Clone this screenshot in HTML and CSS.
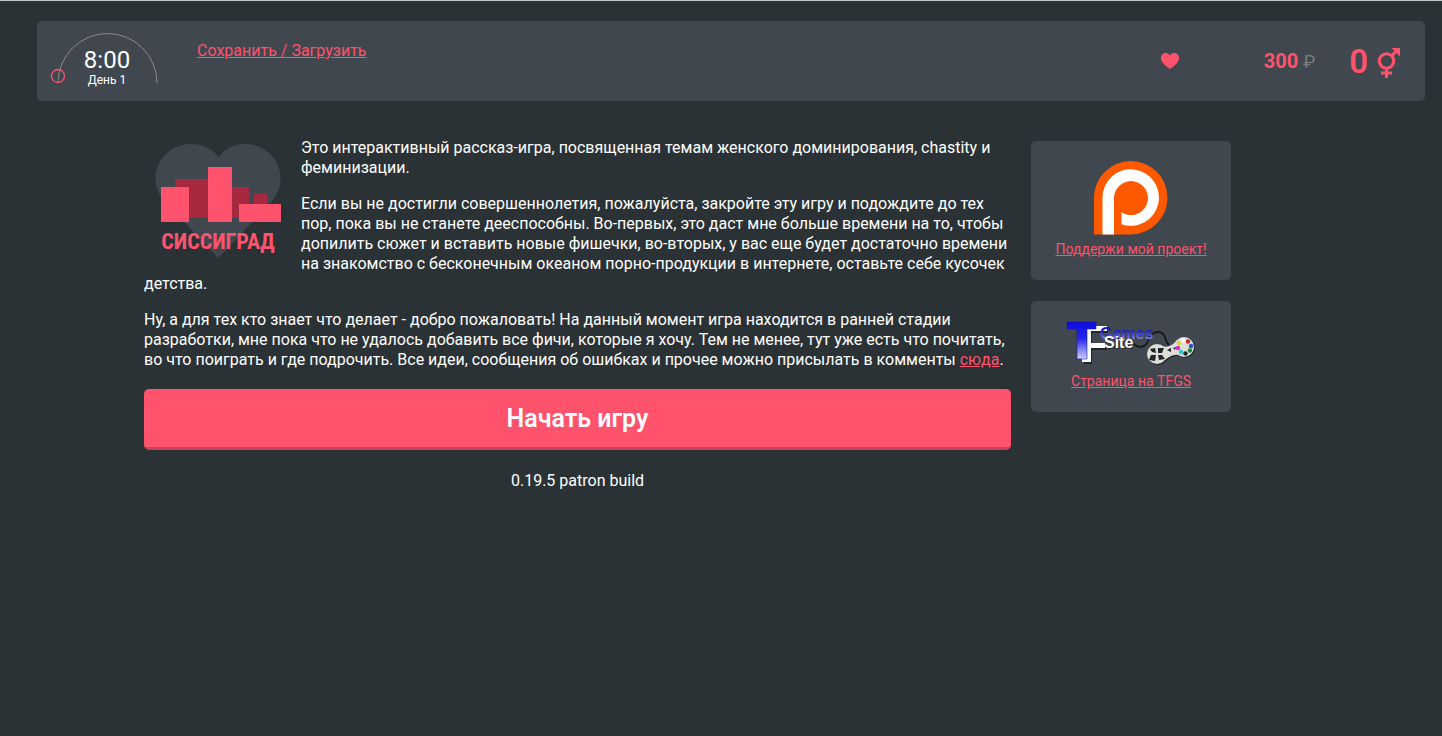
FILE: index.html
```html
<!DOCTYPE html>
<html lang="ru">
<head>
<meta charset="utf-8">
<meta name="viewport" content="width=device-width, initial-scale=1">
<title>Сиссиград</title>
<link rel="stylesheet" href="styles.css">
</head>
<body>
<header class="topbar">
  <div class="clock">
    <svg class="clock-arc" viewBox="0 0 110 56" aria-hidden="true">
      <path d="M8 50A49.500 49.500 0 0 1 107 50" fill="none" stroke="#878b8e"/>
      <circle cx="8" cy="43" r="6.500" fill="none" stroke="#ff526c" stroke-width="1.300"/>
    </svg>
    <div class="clock-time">8:00</div>
    <div class="clock-day">День 1</div>
  </div>
  <nav class="menu"><a href="#save">Сохранить / Загрузить</a></nav>
  <div class="stats">
    <svg class="heart" viewBox="0 0 18 16" aria-hidden="true"><path d="M9 16C5 13 0 9.500 0 5C0 2 2 0 4.800 0C6.800 0 8.200 1 9 2.500C9.800 1 11.200 0 13.200 0C16 0 18 2 18 5C18 9.500 13 13 9 16Z" fill="#ff526c"/></svg>
    <div class="money"><b>300</b> <span class="currency">₽</span></div>
    <div class="score"><b>0</b>
      <svg class="gender" viewBox="0 0 24 32" aria-hidden="true"><g fill="none" stroke="#ff526c" stroke-width="3.100"><circle cx="9.500" cy="14" r="7.200"/><path d="M14.500 9L20 3.500M9.500 21V31M4 26H15"/></g><path d="M14.500 1H23V9.500L20.300 6.800L17.200 3.700Z" fill="#ff526c"/></svg>
    </div>
  </div>
</header>
<main class="page">
  <article class="story">
    <svg class="logo" viewBox="0 0 157 130" role="img" aria-label="Сиссиград">
      <path d="M74.500 120L22 65C8 51 8 29 22 16C36 3 58 3 71 15L74.500 19L78 15C91 3 113 3 126 16C140 29 140 51 126 65Z" fill="#40474e"/>
      <path d="M31 41H88V49H105V80H31ZM110 56H123V80H110Z" fill="#a6293f"/>
      <path d="M17 49H45V84H17ZM64 29H88V84H64ZM95 66H137V84H95Z" fill="#ff526c"/>
      <text class="logo-text" x="74" y="111" text-anchor="middle">СИССИГРАД</text>
    </svg>
    <p>Это интерактивный рассказ-игра, посвященная темам женского доминирования, chastity и феминизации.</p>
    <p>Если вы не достигли совершеннолетия, пожалуйста, закройте эту игру и подождите до тех пор, пока вы не станете дееспособны. Во-первых, это даст мне больше времени на то, чтобы допилить сюжет и вставить новые фишечки, во-вторых, у вас еще будет достаточно времени на знакомство с бесконечным океаном порно-продукции в интернете, оставьте себе кусочек детства.</p>
    <p>Ну, а для тех кто знает что делает - добро пожаловать! На данный момент игра находится в ранней стадии разработки, мне пока что не удалось добавить все фичи, которые я хочу. Тем не менее, тут уже есть что почитать, во что поиграть и где подрочить. Все идеи, сообщения об ошибках и прочее можно присылать в комменты <a href="#comments">сюда</a>.</p>
    <button class="start" type="button">Начать игру</button>
    <div class="version">0.19.5 patron build</div>
  </article>
  <aside class="sidebar">
    <section class="card">
      <svg class="patreon" viewBox="0 0 74 74" aria-hidden="true">
        <path d="M0 73.500V37A36.750 36.750 0 1 1 37 73.500Z" fill="#ff5900"/>
        <path d="M8.500 73.500V36.500A28.250 28.250 0 1 1 27.500 63.200V51.200A17 17 0 1 0 20 36.500V73.500Z" fill="#fff"/>
      </svg>
      <a href="#patreon">Поддержи мой проект!</a>
    </section>
    <section class="card">
      <svg class="tfgs" viewBox="0 0 130 46" aria-hidden="true">
        <defs>
          <linearGradient id="blue" x2="0" y2="1"><stop offset="0" stop-color="#0b0be0"/><stop offset=".45" stop-color="#2727ee"/><stop offset="1" stop-color="#d0d0ff"/></linearGradient>
          <linearGradient id="word" x2="0" y2="1"><stop offset=".35" stop-color="#1c1cc8"/><stop offset=".85" stop-color="#8c8cf4"/></linearGradient>
        </defs>
        <path d="M18 7H42V12H26V24H41V29H26V43H18Z" fill="#20252b"/>
        <path d="M16 5H41V10H25V22H39V27H25V41H16Z" fill="#fff"/>
        <path d="M1 1H30V8H21V38H11V8H1Z" fill="url(#blue)" stroke="#1717a0" stroke-width=".6"/>
        <path d="M68 23C73 28 80 26 82 20C85 12 91 9 96 12C101 15 98 20 103 24" fill="none" stroke="#14181c" stroke-width="1.800"/>
        <text class="tfgs-word" x="34" y="18" fill="url(#word)">Games</text>
        <text class="tfgs-shadow" x="39" y="28">Site</text>
        <text class="tfgs-site" x="38" y="27">Site</text>
        <g transform="translate(1 1)" fill="#20252b"><circle cx="91" cy="33" r="10"/><circle cx="118" cy="26" r="10"/><path d="M94 24Q103 29 111 19L118 35Q108 31 99 39Z"/></g>
        <g fill="#deded8"><circle cx="91" cy="33" r="10"/><circle cx="118" cy="26" r="10"/><path d="M94 24Q103 29 111 19L118 35Q108 31 99 39Z"/></g>
        <path d="M84 28L89 27L90 32L86 31ZM92 27L98 27L96 32L92 32ZM83 39L85 34L90 34L89 40ZM92 34L96 34L99 38L93 39Z" fill="#22252a"/>
        <path d="M101 29L105 27L105 31ZM107 27L110 26L109 29Z" fill="#22252a"/>
        <circle cx="117" cy="19.500" r="2.200" fill="#fff"/><circle cx="122" cy="20.500" r="2.200" fill="#c52832"/><circle cx="125" cy="25" r="2.200" fill="#2854ca"/><circle cx="124" cy="29.500" r="2.200" fill="#19853a"/><circle cx="119.500" cy="32.500" r="2.200" fill="#25282c"/><circle cx="115" cy="31" r="2.200" fill="#20c8d0"/><circle cx="112" cy="27" r="2.200" fill="#db28db"/><circle cx="113" cy="22" r="2.200" fill="#d9d62c"/>
      </svg>
      <a href="#tfgs">Страница на TFGS</a>
    </section>
  </aside>
</main>
</body>
</html>
```
FILE: styles.css
```css
* { box-sizing: border-box; }
body {
  margin: 0;
  min-height: 100vh;
  padding: 20px 17px 20px 37px;
  border-top: 1px solid #bdc9cb;
  background: #2b3235;
  color: #fff;
  font: 16px/20px Roboto, "Liberation Sans", sans-serif;
}
a { color: #ff526c; text-decoration: underline; }
.topbar {
  display: flex;
  align-items: center;
  min-height: 80px;
  padding: 0 24px 0 13px;
  border-radius: 5px;
  background: #40474e;
}
.clock {
  position: relative;
  width: 110px;
  height: 56px;
  padding-top: 15px;
  padding-left: 4px;
  text-align: center;
}
.clock-arc { position: absolute; inset: 0; width: 110px; height: 56px; }
.clock-time { font-size: 24px; line-height: 24px; }
.clock-day { font-size: 12px; line-height: 16px; }
.menu { align-self: flex-start; padding: 20px 0 0 37px; }
.stats { display: flex; align-items: center; margin-left: auto; color: #ff526c; }
.heart { width: 18px; height: 16px; margin-right: 85px; }
.money { margin-right: 34px; font-size: 20px; line-height: 24px; }
.currency { color: #777b7f; font-size: 18px; }
.score { display: flex; align-items: center; gap: 9px; padding-top: 2px; font-size: 33px; line-height: 40px; }
.score b { font-weight: 600; }
.gender { width: 24px; height: 32px; margin-top: 2px; }
.page {
  display: flex;
  align-items: flex-start;
  gap: 20px;
  padding: 37px 194px 0 107px;
}
.story { flex: 1; min-width: 0; }
.story p { margin: 0 0 16px; }
.logo { float: left; width: 157px; height: 130px; }
.logo-text { fill: #ff526c; font: bold 22px "Roboto Condensed", "Liberation Sans Narrow", Roboto, sans-serif; }
.start {
  display: block;
  width: 100%;
  margin: 19px 0 20px;
  padding: 15px 20px 14px;
  border: 0;
  border-bottom: 3px solid #c94358;
  border-radius: 5px;
  background: #ff526c;
  color: #fff;
  font: 600 25px/29px Roboto, "Liberation Sans", sans-serif;
}
.version { text-align: center; line-height: 22px; }
.sidebar { display: grid; gap: 21px; width: 200px; padding-top: 3px; }
.card {
  display: flex;
  flex-direction: column;
  align-items: center;
  padding: 20px 20px 21px;
  border-radius: 5px;
  background: #40474e;
  font-size: 14px;
}
.patreon { width: 74px; height: 74px; margin-bottom: 4px; }
.tfgs { width: 130px; height: 46px; margin-bottom: 4px; }
.tfgs-word { font: bold 16px "Liberation Sans", sans-serif; }
.tfgs-site, .tfgs-shadow { font: bold 16px "Liberation Sans", sans-serif; fill: #fff; }
.tfgs-shadow { fill: #20252b; }
```
